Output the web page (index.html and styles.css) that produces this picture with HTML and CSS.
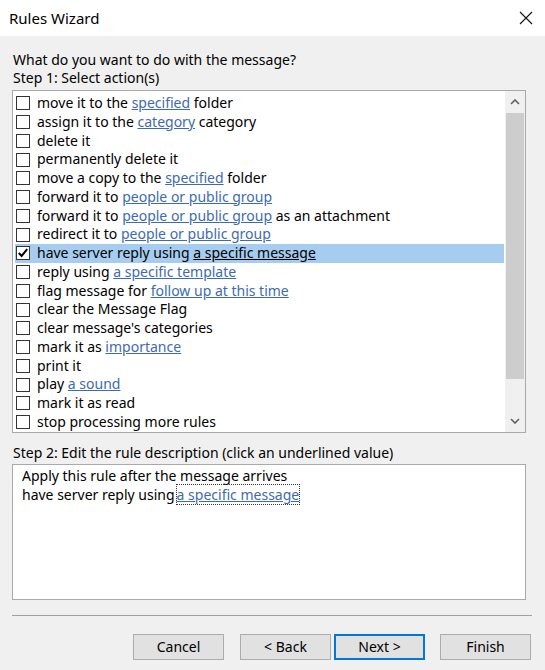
FILE: index.html
```html
<!DOCTYPE html>
<html lang="en">

<head>
    <meta charset="UTF-8">
    <meta name="viewport" content="width=device-width, initial-scale=1.0">
    <title>Rules Wizard</title>
    <link rel="stylesheet" href="styles.css">
</head>

<body>

    <div class="titlebar">
        <span class="title">Rules Wizard</span>
        <svg class="close" width="14" height="14" viewBox="0 0 14 14">
            <path d="M1 1 L13 13 M13 1 L1 13" stroke="#111" stroke-width="1.1" fill="none" />
        </svg>
    </div>

    <div class="content">
        <div class="label">What do you want to do with the message?</div>
        <div class="label">Step 1: Select action(s)</div>

        <div class="listbox">
            <div class="rows">
                <div class="row"><span class="box"></span>move it to the <a>specified</a> folder</div>
                <div class="row"><span class="box"></span>assign it to the <a>category</a> category</div>
                <div class="row"><span class="box"></span>delete it</div>
                <div class="row"><span class="box"></span>permanently delete it</div>
                <div class="row"><span class="box"></span>move a copy to the <a>specified</a> folder</div>
                <div class="row"><span class="box"></span>forward it to <a>people or public group</a></div>
                <div class="row"><span class="box"></span>forward it to <a>people or public group</a> as an attachment</div>
                <div class="row"><span class="box"></span>redirect it to <a>people or public group</a></div>
                <div class="row selected"><span class="box">
                        <svg width="12" height="12" viewBox="0 0 12 12">
                            <path d="M1.8 6 L4.6 9 L10.2 2.2" stroke="#000" stroke-width="2" fill="none" />
                        </svg>
                    </span>have server reply using <a>a specific message</a></div>
                <div class="row"><span class="box"></span>reply using <a>a specific template</a></div>
                <div class="row"><span class="box"></span>flag message for <a>follow up at this time</a></div>
                <div class="row"><span class="box"></span>clear the Message Flag</div>
                <div class="row"><span class="box"></span>clear message's categories</div>
                <div class="row"><span class="box"></span>mark it as <a>importance</a></div>
                <div class="row"><span class="box"></span>print it</div>
                <div class="row"><span class="box"></span>play <a>a sound</a></div>
                <div class="row"><span class="box"></span>mark it as read</div>
                <div class="row"><span class="box"></span>stop processing more rules</div>
            </div>
            <div class="scrollbar">
                <div class="arrow">
                    <svg width="10" height="6" viewBox="0 0 10 6">
                        <path d="M1 5 L5 1 L9 5" stroke="#606060" stroke-width="1.6" fill="none" />
                    </svg>
                </div>
                <div class="track">
                    <div class="thumb"></div>
                </div>
                <div class="arrow">
                    <svg width="10" height="6" viewBox="0 0 10 6">
                        <path d="M1 1 L5 5 L9 1" stroke="#606060" stroke-width="1.6" fill="none" />
                    </svg>
                </div>
            </div>
        </div>

        <div class="label step2">Step 2: Edit the rule description (click an underlined value)</div>

        <div class="description">
            <div>Apply this rule after the message arrives</div>
            <div>have server reply using<a class="focused">a specific message</a></div>
        </div>

        <hr class="separator">

        <div class="buttons">
            <button>Cancel</button>
            <button class="back">&lt; Back</button>
            <button class="default">Next &gt;</button>
            <button class="finish">Finish</button>
        </div>
    </div>

</body>

</html>
```

FILE: styles.css
```css
body {
    margin: 0;
    font-family: "Noto Sans", Arial, sans-serif;
    font-size: 14px;
    color: #000;
    background: #f0f0f0;
}

.titlebar {
    height: 36px;
    background: white;
    display: flex;
    align-items: center;
    justify-content: space-between;
    padding: 0 12px 0 9px;
}

.title {
    font-size: 15px;
}

.content {
    padding: 15px 19px 0 12px;
}

.label {
    line-height: 18px;
    padding-left: 1px;
}

.listbox {
    margin-top: 3px;
    height: 341px;
    border: 1px solid #a9a9a9;
    background: white;
    display: flex;
}

.rows {
    flex: 1;
    padding: 3px 1px 0 2px;
    overflow: hidden;
}

.row {
    height: 18.75px;
    line-height: 18.75px;
    display: flex;
    align-items: center;
    white-space: pre;
}

.row.selected {
    background: #a6cdef;
}

.row.selected a {
    color: #000;
}

.box {
    width: 14px;
    height: 14px;
    border: 1px solid #333;
    background: white;
    margin: 0 7px 0 1px;
    box-sizing: border-box;
    display: flex;
    align-items: center;
    justify-content: center;
}

.box svg {
    flex: none;
}

a {
    color: #3e6bb0;
    text-decoration: underline;
}

.scrollbar {
    width: 20px;
    background: #f0f0f0;
    display: flex;
    flex-direction: column;
}

.arrow {
    height: 22px;
    display: flex;
    align-items: center;
    justify-content: center;
}

.track {
    flex: 1;
}

.thumb {
    height: 266px;
    margin: 0 1px;
    background: #cdcdcd;
}

.step2 {
    margin-top: 11px;
}

.description {
    margin-top: 2px;
    height: 132px;
    border: 1px solid #a9a9a9;
    background: white;
    padding: 1px 9px;
    line-height: 19px;
}

.description .focused {
    outline: 1px dotted #333;
    margin-left: 2px;
}

.separator {
    margin: 15px -6px 0 0;
    border: none;
    border-top: 1px solid #a0a0a0;
}

.buttons {
    margin: 18px -5px 0 0;
    display: flex;
    justify-content: flex-end;
}

button {
    width: 91px;
    height: 26px;
    background: #e1e1e1;
    border: 1px solid #adadad;
    font-family: "Noto Sans", Arial, sans-serif;
    font-size: 14px;
    color: #000;
    padding: 0 0 2px;
}

button.back {
    margin-left: 16px;
}

button.default {
    margin-left: 3px;
    border: 2px solid #0078d7;
}

button.finish {
    margin-left: 15px;
}
```
